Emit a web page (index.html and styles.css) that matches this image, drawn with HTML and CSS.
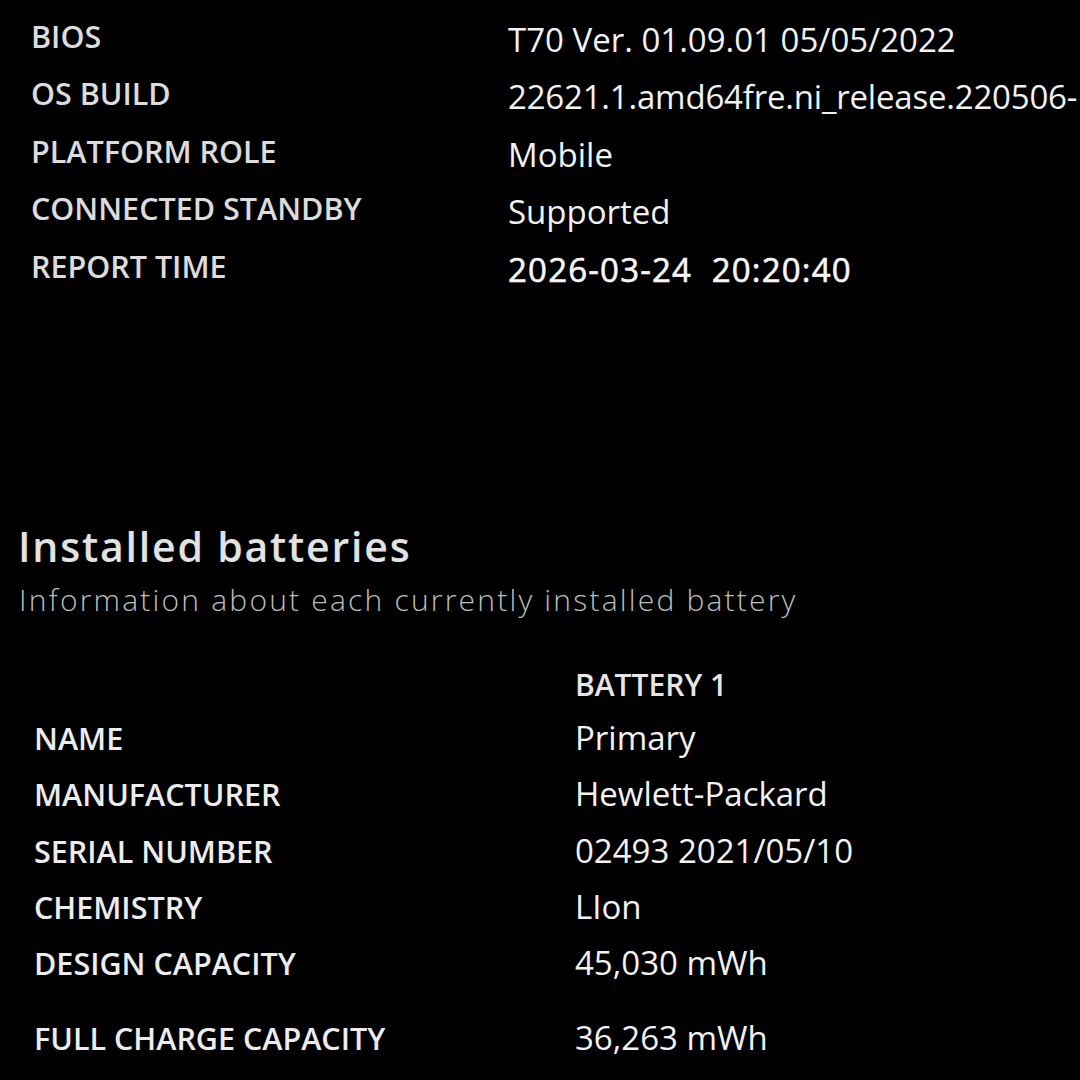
FILE: index.html
```html
<!DOCTYPE html>
<html lang="en">
<head>
<meta charset="utf-8">
<title>Battery report</title>
<link rel="stylesheet" href="styles.css">
</head>
<body>
<main class="page">
  <section class="sys">
    <div class="label">BIOS</div><div class="value">T70 Ver. 01.09.01 05/05/2022</div>
    <div class="label">OS BUILD</div><div class="value value-tight">22621.1.amd64fre.ni_release.220506-</div>
    <div class="label">PLATFORM ROLE</div><div class="value">Mobile</div>
    <div class="label">CONNECTED STANDBY</div><div class="value">Supported</div>
    <div class="label">REPORT TIME</div><div class="value value-strong">2026-03-24&nbsp; 20:20:40</div>
  </section>

  <header class="section-head">
    <h2 class="title">Installed batteries</h2>
    <p class="subtitle">Information about each currently installed battery</p>
  </header>

  <section class="batt">
    <div class="colhead">BATTERY 1</div>
    <div class="label">NAME</div><div class="value">Primary</div>
    <div class="label">MANUFACTURER</div><div class="value">Hewlett-Packard</div>
    <div class="label">SERIAL NUMBER</div><div class="value">02493 2021/05/10</div>
    <div class="label">CHEMISTRY</div><div class="value">LIon</div>
    <div class="label">DESIGN CAPACITY</div><div class="value">45,030 mWh</div>
    <div class="label gap">FULL CHARGE CAPACITY</div><div class="value gap">36,263 mWh</div>
  </section>
</main>
</body>
</html>
```

FILE: styles.css
```css
html, body {
  margin: 0;
  padding: 0;
  background: #000;
}
body {
  width: 1080px;
  height: 1080px;
  overflow: hidden;
  font-family: "Open Sans", "Noto Sans", "Liberation Sans", sans-serif;
  color: #f0f0f0;
}
.page {
  display: flex;
  flex-direction: column;
  padding-top: 9.5px;
  white-space: nowrap;
}
.label {
  font-size: 30.5px;
  font-weight: 600;
  color: #dcdcdc;
}
.value {
  font-size: 33px;
  font-weight: 400;
  color: #f2f2f2;
}

/* system info block */
.sys {
  display: grid;
  grid-template-columns: 477px auto;
  grid-auto-rows: 57.5px;
  align-items: start;
  padding-left: 31px;
}
.sys .label {
  line-height: 53.3px;
}
.sys .value {
  line-height: 59.5px;
}
.value-tight {
  letter-spacing: -0.2px;
}
.value-strong {
  letter-spacing: 1.2px;
  -webkit-text-stroke: 0.6px currentColor;
  color: #f6f6f6;
}

/* section heading */
.section-head {
  margin-top: 225px;
  padding-left: 18px;
}
.title {
  margin: 0;
  font-size: 41px;
  line-height: 48px;
  font-weight: 600;
  letter-spacing: 1.8px;
  color: #e2e2e2;
}
.subtitle {
  margin: 10px 0 0 1px;
  font-size: 30px;
  line-height: 40px;
  font-weight: 300;
  letter-spacing: 2.2px;
  color: #bdbdbd;
}

/* battery table */
.batt {
  display: grid;
  grid-template-columns: 541px auto;
  grid-template-rows: 50px repeat(5, 56.25px) 75px;
  align-items: baseline;
  margin-top: 40px;
  padding-left: 34px;
}
.batt .label,
.batt .value {
  line-height: 56px;
}
.batt .label {
  color: #ececec;
}
.colhead {
  grid-column: 2;
  font-size: 30px;
  line-height: 50px;
  font-weight: 600;
  color: #e6e6e6;
}
.gap {
  padding-top: 19px;
}
```
